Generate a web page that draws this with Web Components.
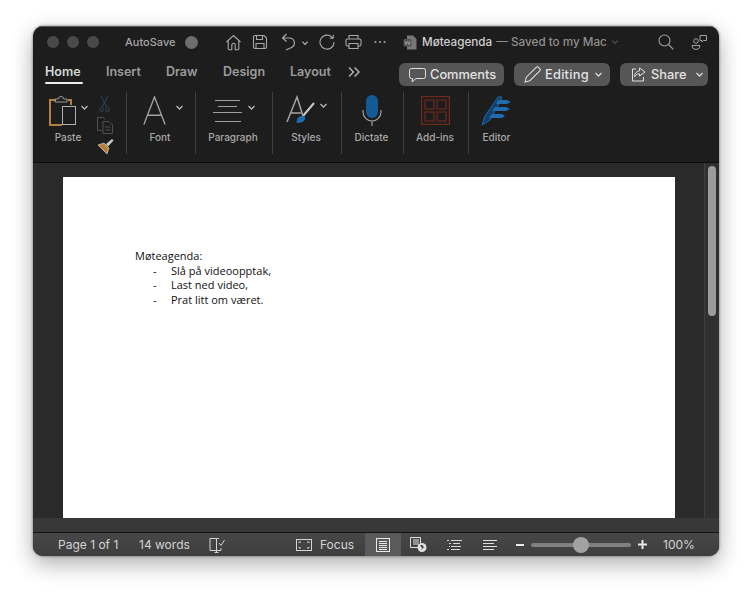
<!DOCTYPE html>
<html lang="en">
<head>
<meta charset="utf-8">
<title>Møteagenda</title>
<style>
    html, body { margin: 0; height: 100%; background: #fff; }
    body { font-family: Inter, "Liberation Sans", sans-serif; }
</style>
</head>
<body>
<word-window>
    <title-bar></title-bar>
    <tab-bar></tab-bar>
    <word-ribbon></word-ribbon>
    <doc-area>
        <doc-page>
            <p>Møteagenda:</p>
            <doc-item>Slå på videoopptak,</doc-item>
            <doc-item>Last ned video,</doc-item>
            <doc-item>Prat litt om været.</doc-item>
        </doc-page>
    </doc-area>
    <status-bar></status-bar>
</word-window>

<script>
const chevron = (w = 9, c = "#b8b8b8") => `<svg width="${w}" height="${w}" viewBox="0 0 9 9" fill="none" stroke="${c}" stroke-width="1.3"><path d="M1.5 3l3 3 3-3"/></svg>`;

class WordWindow extends HTMLElement {
    constructor() {
        super();
        this.attachShadow({ mode: "open" });
        this.shadowRoot.innerHTML = `
            <style>
                :host {
                    display: flex;
                    flex-direction: column;
                    position: relative;
                    box-sizing: border-box;
                    width: 686px;
                    height: 530px;
                    margin: 26px 0 0 33px;
                    border-radius: 10px;
                    overflow: hidden;
                    background: #1d1d1d;
                    box-shadow: 0 8px 22px rgba(0,0,0,.32), 0 0 3px rgba(0,0,0,.5);
                }
            </style>
            <slot></slot>
        `;
    }
}

class TitleBar extends HTMLElement {
    constructor() {
        super();
        this.attachShadow({ mode: "open" });
        this.shadowRoot.innerHTML = `
            <style>
                :host {
                    display: flex;
                    align-items: center;
                    height: 33px;
                    padding: 0 0 2px 14px;
                    color: #a6a6a6;
                    font-size: 11px;
                    font-weight: 500;
                    box-sizing: border-box;
                    border-top: 1px solid #5a5a5a;
                }
                .dot { width: 12px; height: 12px; border-radius: 50%; background: #4a4a4a; margin-right: 8px; }
                .auto { margin-left: 18px; width: 51px; }
                .toggle { width: 13px; height: 13px; border-radius: 50%; background: #6e6e6e; margin: 0 27px 0 9px; }
                svg { display: block; flex: none; }
                .tools { display: flex; align-items: center; }
                .title { display: flex; align-items: center; font-size: 11.7px; font-weight: 500; margin-left: 17px; width: 211px; white-space: nowrap; }
                .title b { font-weight: 500; color: #cfcfcf; margin-left: 5px; }
                .title span { color: #8f8f8f; margin-left: 4px; }
                .right { display: flex; align-items: center; gap: 17px; margin-left: 44px; }
            </style>
            <div class="dot"></div><div class="dot"></div><div class="dot"></div>
            <div class="auto">AutoSave</div>
            <div class="toggle"></div>
            <div class="tools">
                <svg width="17" height="17" viewBox="0 0 17 17" fill="none" stroke="#a8a8a8" stroke-width="1.1"><path d="M1.5 8L8.5 1.5 15.5 8M3.2 6.5v8.2a1 1 0 0 0 1 1h2.6V11a1.7 1.7 0 0 1 3.4 0v4.7h2.6a1 1 0 0 0 1-1V6.5"/></svg>
                <svg style="margin-left:10px" width="16" height="16" viewBox="0 0 16 16" fill="none" stroke="#a8a8a8" stroke-width="1.1"><path d="M2.5 1.5h9.5l2.5 2.5v9a1.5 1.5 0 0 1-1.5 1.5h-10a1.5 1.5 0 0 1-1.5-1.5v-10a1.5 1.5 0 0 1 1.5-1.5zM4.5 1.5v4h6v-4M4 14.5v-5h8v5"/></svg>
                <svg style="margin-left:13px" width="16" height="18" viewBox="0 0 16 18" fill="none" stroke="#a8a8a8" stroke-width="1.2"><path d="M5.5 1L1.5 5l4 3.5M1.5 5h7.5a5 5 0 0 1 1.5 9.5L5 17"/></svg>
                <span style="margin:1px 0 0 4px">${chevron(8)}</span>
                <svg style="margin-left:10px" width="16" height="16" viewBox="0 0 16 16" fill="none" stroke="#a8a8a8" stroke-width="1.1"><path d="M13.5 3.8A7 7 0 1 0 15 8M14.2 .8v3.5h-3.5"/></svg>
                <svg style="margin-left:10px" width="17" height="16" viewBox="0 0 17 16" fill="none" stroke="#a8a8a8" stroke-width="1.1"><path d="M4 5V1.5h9V5M4 12H2.5A1.5 1.5 0 0 1 1 10.5V6.5A1.5 1.5 0 0 1 2.5 5h12A1.5 1.5 0 0 1 16 6.5v4a1.5 1.5 0 0 1-1.5 1.5H13M4 9.5h9v5H4z"/></svg>
                <svg style="margin-left:12px" width="12" height="4" viewBox="0 0 12 4" fill="#a8a8a8"><circle cx="1.5" cy="2" r="1"/><circle cx="6" cy="2" r="1"/><circle cx="10.5" cy="2" r="1"/></svg>
            </div>
            <div class="title">
                <svg width="14" height="15" viewBox="0 0 14 15"><path d="M4 .5h6l3.5 3.5v10.5H4z" fill="#777"/><rect x=".5" y="4" width="8" height="7.5" rx="1" fill="#555"/><path d="M2 6l1 3.5L4.5 6.5 6 9.5 7 6" fill="none" stroke="#aaa" stroke-width=".8"/></svg>
                <b>Møteagenda</b><span>— Saved to my Mac</span>
                <span style="margin:0 0 0 4px;opacity:.35">${chevron(8)}</span>
            </div>
            <div class="right">
                <svg width="16" height="16" viewBox="0 0 16 16" fill="none" stroke="#a0a0a0" stroke-width="1.1"><circle cx="6.5" cy="6.5" r="5.5"/><path d="M10.5 10.5L15.3 15.3"/></svg>
                <svg width="17" height="17" viewBox="0 0 17 17" fill="none" stroke="#a0a0a0" stroke-width="1"><circle cx="5" cy="7" r="2.3"/><path d="M1 11.5h8a4 4 0 0 1-8 0zM9 1.5h6.5v5h-3L11 8V6.500H9z"/></svg>
            </div>
        `;
    }
}

class TabBar extends HTMLElement {
    constructor() {
        super();
        this.attachShadow({ mode: "open" });
        this.shadowRoot.innerHTML = `
            <style>
                :host {
                    display: flex;
                    align-items: flex-start;
                    height: 30px;
                    padding-left: 12px;
                    box-sizing: border-box;
                    font-size: 12.5px;
                    font-weight: 600;
                    color: #9c9c9c;
                }
                .tab { padding-top: 5px; height: 25px; box-sizing: border-box; position: relative; }
                .tab.on { color: #d6d6d6; }
                .tab.on::after { content: ""; position: absolute; left: 0; right: 0; bottom: 0; height: 2.5px; border-radius: 2px; background: #eee; }
                svg { display: block; flex: none; }
                .btn {
                    display: flex;
                    align-items: center;
                    box-sizing: border-box;
                    height: 23px;
                    margin-top: 4px;
                    border-radius: 6px;
                    background: #565656;
                    color: #e2e2e2;
                    font-size: 12.8px;
                    font-weight: 500;
                }
            </style>
            <div class="tab on" style="width:38px">Home</div>
            <div class="tab" style="margin-left:23px;width:37px">Insert</div>
            <div class="tab" style="margin-left:23px;width:34px">Draw</div>
            <div class="tab" style="margin-left:23px;width:44px">Design</div>
            <div class="tab" style="margin-left:23px;width:42px">Layout</div>
            <div class="tab" style="margin-left:15px;width:36px">
                <svg width="14" height="14" style="margin-top:1px" viewBox="0 0 14 14" fill="none" stroke="#b0b0b0" stroke-width="1.5"><path d="M2 2.5L6.5 7 2 11.5M7.5 2.5L12 7 7.5 11.5"/></svg>
            </div>
            <div class="btn" style="width:105px;padding-left:10px;margin-left:16px">
                <svg width="17" height="16" viewBox="0 0 17 16" fill="none" stroke="#e0e0e0" stroke-width="1"><path d="M2.5 1.5h12a2 2 0 0 1 2 2v6a2 2 0 0 1-2 2H7L3 15l.7-3.5H2.500a2 2 0 0 1-2-2v-6a2 2 0 0 1 2-2z"/></svg>
                <span style="margin-left:4px">Comments</span>
            </div>
            <div class="btn" style="width:96px;padding-left:10px;margin-left:10px">
                <svg width="17" height="17" viewBox="0 0 16 16" fill="none" stroke="#e0e0e0" stroke-width="1"><path d="M1 15l1.200-4.500L11.500 1.200a1.500 1.500 0 0 1 2.100 0l1.200 1.200a1.500 1.500 0 0 1 0 2.100L5.500 13.800z"/></svg>
                <span style="margin-left:4px;width:49px;letter-spacing:.25px">Editing</span>${chevron(9, "#d8d8d8")}
            </div>
            <div class="btn" style="width:88px;padding-left:11px;margin-left:10px">
                <svg width="15" height="15" viewBox="0 0 15 15" fill="none" stroke="#e0e0e0" stroke-width="1"><path d="M5 2H1.500v12h11V10M8.500 1l5.500 4-5.500 4V6.800C6 6.800 4.500 8 3.500 10c0-3.500 2-6 5-6.200z"/></svg>
                <span style="margin-left:5px;width:44px">Share</span>${chevron(9, "#d8d8d8")}
            </div>
        `;
    }
}

class RibbonItem extends HTMLElement {
    constructor() {
        super();
        this.attachShadow({ mode: "open" });
        this.shadowRoot.innerHTML = `
            <style>
                :host {
                    display: flex;
                    flex-direction: column;
                    align-items: center;
                    box-sizing: border-box;
                    height: 62px;
                    padding: 1px 2px 0 0;
                    border-right: 1px solid #3f3f3f;
                    color: #a8a8a8;
                    font-size: 10px;
                    font-weight: 500;
                }
                :host([last]) { border-right: 0; }
                .icon { height: 35px; display: flex; align-items: center; }
                .label { margin-top: 3px; }
            </style>
            <div class="icon"><slot></slot></div>
            <div class="label"></div>
        `;
    }
    connectedCallback() {
        this.shadowRoot.querySelector(".label").textContent = this.getAttribute("label");
    }
}

class WordRibbon extends HTMLElement {
    constructor() {
        super();
        this.attachShadow({ mode: "open" });
        this.shadowRoot.innerHTML = `
            <style>
                :host {
                    display: flex;
                    box-sizing: border-box;
                    height: 74px;
                    padding-top: 3px;
                    border-bottom: 1px solid #0c0c0c;
                }
                .paste { position: relative; width: 94px; height: 62px; flex: none; }
                .paste ribbon-item { width: 72px; border: 0; height: 62px; }
                .mini { position: absolute; }
                svg { display: block; }
                .row { display: flex; align-items: center; gap: 3px; }
            </style>
            <div class="paste" style="border-right:1px solid #3f3f3f;box-sizing:border-box">
                <ribbon-item label="Paste">
                    <div class="row">
                        <svg width="29" height="31" viewBox="0 0 29 31" fill="none">
                            <path d="M8 5H2v25h12" stroke="#b5813a" stroke-width="2"/>
                            <path d="M20 5h3v5" stroke="#b5813a" stroke-width="2"/>
                            <path d="M7 7V4h3.5a2.5 2.5 0 0 1 5 0H19v3z" stroke="#9a9a9a" stroke-width="1"/>
                            <rect x="14.5" y="11.5" width="13" height="18" stroke="#b0b0b0"/>
                        </svg>
                        <span style="margin-top:-6px">${chevron(9)}</span>
                    </div>
                </ribbon-item>
                <svg class="mini" style="left:66px;top:4px" width="11" height="16" viewBox="0 0 11 16" fill="none" stroke="#2f424c" stroke-width="1.1"><path d="M2 0l6 11M9 0L3 11"/><ellipse cx="2.5" cy="13.5" rx="1.8" ry="2"/><ellipse cx="8.5" cy="13.5" rx="1.8" ry="2"/></svg>
                <svg class="mini" style="left:64px;top:25px" width="16" height="17" viewBox="0 0 16 17" fill="none" stroke="#4f4f4f"><path d="M5 13.5H.5V.5h6L8 2.500M6 4.500h6L15.500 8v8.500H6zM8 10h5.500M8 13h5.500"/></svg>
                <svg class="mini" style="left:64px;top:46px" width="17" height="17" viewBox="0 0 17 17"><path d="M1 7l6-2 5 5-2 6z" fill="#b5813a" stroke="#d0d0d0" stroke-width=".7"/><path d="M9 6l6-5 1.5 1.5L11 8.500z" fill="#c8c8c8"/></svg>
            </div>
            <ribbon-item label="Font" style="width:69px">
                <div class="row" style="gap:9px;margin-left:6px">
                    <svg width="23" height="29" viewBox="0 0 26 30" preserveAspectRatio="none" fill="none" stroke="#a4a4a4" stroke-width="1.5"><path d="M1 29.5L13 1l12 28.5M5 20h16"/></svg>
                    <span style="margin-top:-6px">${chevron(9)}</span>
                </div>
            </ribbon-item>
            <ribbon-item label="Paragraph" style="width:77px">
                <div class="row" style="gap:5px;margin-left:2px">
                    <svg width="29" height="24" viewBox="0 0 29 24" fill="none" stroke="#a0a0a0"><path d="M2 1.5h25M5 7.5h19M0 13.5h29M2 22.5h26"/></svg>
                    <span style="margin-top:-6px">${chevron(9)}</span>
                </div>
            </ribbon-item>
            <ribbon-item label="Styles" style="width:69px">
                <div class="row" style="gap:3px;margin-left:2px">
                    <svg width="30" height="31" viewBox="0 0 30 31" fill="none">
                        <path d="M1 27L11 2l6 19M5 18h10" stroke="#a4a4a4" stroke-width="1.5"/>
                        <path d="M28 8L17 21" stroke="#c8c8c8" stroke-width="2"/>
                        <path d="M11 24c3-4 7-4 8-2 1 3-2 6-8 6-1 0 0-2 0-4z" fill="#1f6cae"/>
                    </svg>
                    <span style="margin-top:-10px">${chevron(9)}</span>
                </div>
            </ribbon-item>
            <ribbon-item label="Dictate" style="width:62px">
                <svg width="20" height="31" viewBox="0 0 20 31" fill="none">
                    <rect x="4" y="0" width="12" height="23" rx="6" fill="#135a96"/>
                    <path d="M1 15v2a9 9 0 0 0 18 0v-2M10 26v5" stroke="#a0a0a0" stroke-width="1.2"/>
                </svg>
            </ribbon-item>
            <ribbon-item label="Add-ins" style="width:65px">
                <svg width="29" height="29" viewBox="0 0 29 29" fill="none" stroke="#6e2a1b" stroke-width="1.2"><rect x=".6" y=".6" width="27.8" height="27.8"/><rect x="4" y="4" width="9" height="9"/><rect x="16" y="4" width="9" height="9"/><rect x="4" y="16" width="9" height="9"/><rect x="16" y="16" width="9" height="9"/></svg>
            </ribbon-item>
            <ribbon-item label="Editor" last style="width:57px">
                <svg width="31" height="31" viewBox="0 0 31 31">
                    <path d="M1 30l3-9L17 2h4l-2 5L9 25z" fill="#123f6b" stroke="#1c68a8" stroke-width="1"/>
                    <path d="M17 5h9l4 2-4 2H15zM14 12h11l4 2-4 2H11zM11 19h10l3 2-3 2H8z" fill="#1f6cae"/>
                </svg>
            </ribbon-item>
        `;
    }
}

class DocArea extends HTMLElement {
    constructor() {
        super();
        this.attachShadow({ mode: "open" });
        this.shadowRoot.innerHTML = `
            <style>
                :host { display: flex; height: 355px; background: #2a2a2a; }
                .view { flex: 1; padding: 14px 0 0 30px; overflow: hidden; }
                .bar {
                    width: 15px;
                    box-sizing: border-box;
                    background: #303030;
                    border-left: 1px solid #3f3f3f;
                    padding: 3px 0 0 3px;
                }
                .thumb { width: 8px; height: 150px; border-radius: 4px; background: #9c9c9c; }
            </style>
            <div class="view"><slot></slot></div>
            <div class="bar"><div class="thumb"></div></div>
        `;
    }
}

class DocPage extends HTMLElement {
    constructor() {
        super();
        this.attachShadow({ mode: "open" });
        this.shadowRoot.innerHTML = `
            <style>
                :host {
                    display: block;
                    box-sizing: border-box;
                    width: 612px;
                    height: 341px;
                    padding: 72px 0 0 72px;
                    background: #fff;
                    color: #111;
                    font: 11px/14.7px "Open Sans", sans-serif;
                }
                ::slotted(p) { margin: 0; }
            </style>
            <slot></slot>
        `;
    }
}

class DocItem extends HTMLElement {
    constructor() {
        super();
        this.attachShadow({ mode: "open" });
        this.shadowRoot.innerHTML = `
            <style>
                :host { display: flex; padding-left: 18px; }
                .dash { width: 18px; }
            </style>
            <span class="dash">-</span><slot></slot>
        `;
    }
}

class StatusBar extends HTMLElement {
    constructor() {
        super();
        this.attachShadow({ mode: "open" });
        this.shadowRoot.innerHTML = `
            <style>
                :host {
                    display: block;
                    flex: 1;
                    font-size: 12px;
                    color: #d4d4d4;
                }
                .strip { height: 15px; background: #383838; border-bottom: 1px solid #111; box-sizing: border-box; }
                .bar {
                    display: flex;
                    align-items: center;
                    height: 23px;
                    padding-left: 25px;
                    background: linear-gradient(#474747, #3e3e3e);
                }
                svg { display: block; flex: none; }
                .view { width: 36px; height: 23px; display: flex; align-items: center; justify-content: center; background: #5a5a5a; }
                .slider { position: relative; width: 100px; height: 4px; border-radius: 2px; background: #808080; margin-left: 7px; }
                .knob { position: absolute; left: 42px; top: -6px; width: 16px; height: 16px; border-radius: 50%; background: #a2a2a2; }
            </style>
            <div class="strip"></div>
            <div class="bar">
                <span style="width:81px">Page 1 of 1</span>
                <span style="width:70px">14 words</span>
                <svg width="16" height="16" viewBox="0 0 16 16" fill="none" stroke="#d4d4d4"><path d="M7.5 13.5H1v-12h6.5v14M5.5 15.5h4M7.5 1.5H10M7.5 13.5H12M10 6l2 2.500L15.500 3M12 11v2.500"/></svg>
                <svg style="margin-left:71px" width="16" height="12" viewBox="0 0 16 12" fill="none" stroke="#d4d4d4"><rect x=".5" y=".5" width="15" height="11"/><path d="M3 4V3h2M13 4V3h-2M3 8v1h2M13 8v1h-2" stroke-width="1"/></svg>
                <span style="margin-left:8px;width:45px">Focus</span>
                <div class="view">
                    <svg width="14" height="14" viewBox="0 0 14 14" fill="none" stroke="#e8e8e8"><rect x=".5" y=".5" width="13" height="13"/><path d="M3 3.500h8M3 5.500h8M3 7.500h8M3 9.500h8M3 11.500h8"/></svg>
                </div>
                <svg style="margin-left:9px" width="17" height="15" viewBox="0 0 17 15"><path d="M.5.5h10v10H.5zM3 3h6M3 5h6M3 7h6" fill="none" stroke="#e0e0e0"/><circle cx="12" cy="10.5" r="4.5" fill="#e0e0e0"/><path d="M10 8l2 3-1 2 3-3-2-2z" fill="#3e3e3e"/></svg>
                <svg style="margin-left:20px" width="15" height="12" viewBox="0 0 15 12" fill="none" stroke="#d8d8d8"><path d="M4 1.500h11M6 4.500h7M4 7.500h10M4 10.500h9M0 1.500h2M2 4.500h2M2 7.500h1M0 10.500h2"/></svg>
                <svg style="margin-left:21px" width="14" height="12" viewBox="0 0 14 12" fill="none" stroke="#e0e0e0"><path d="M0 1.500h14M0 4.500h11M0 7.500h14M0 10.500h11"/></svg>
                <svg style="margin-left:19px" width="8" height="2" viewBox="0 0 8 2"><rect width="8" height="2" fill="#e8e8e8"/></svg>
                <div class="slider"><div class="knob"></div></div>
                <svg style="margin-left:7px" width="9" height="9" viewBox="0 0 9 9" fill="#e8e8e8"><path d="M3.5 0h2v3.5H9v2H5.5V9h-2V5.5H0v-2h3.5z"/></svg>
                <span style="margin-left:16px">100%</span>
            </div>
        `;
    }
}

customElements.define("word-window", WordWindow);
customElements.define("title-bar", TitleBar);
customElements.define("tab-bar", TabBar);
customElements.define("ribbon-item", RibbonItem);
customElements.define("word-ribbon", WordRibbon);
customElements.define("doc-area", DocArea);
customElements.define("doc-page", DocPage);
customElements.define("doc-item", DocItem);
customElements.define("status-bar", StatusBar);
</script>
</body>
</html>
